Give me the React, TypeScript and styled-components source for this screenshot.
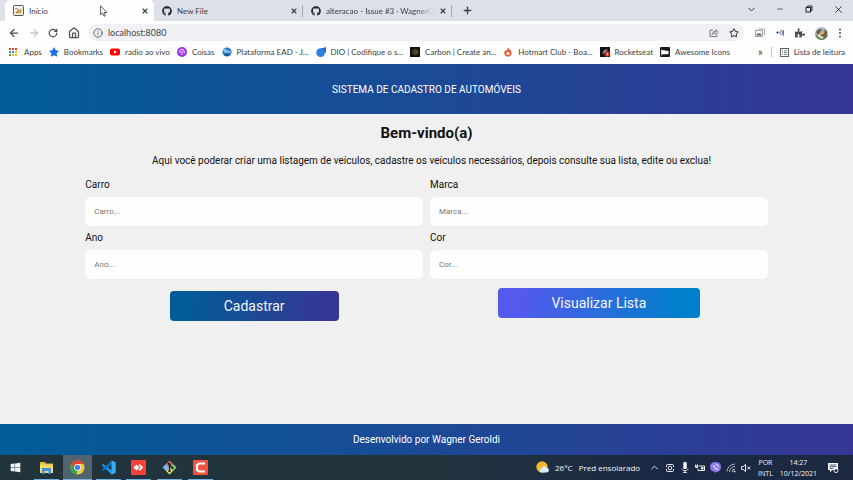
import React from 'react';
import styled, { createGlobalStyle, css } from 'styled-components';
import { FaGithub, FaStar, FaPuzzlePiece, FaWindows } from 'react-icons/fa';
import {
  ArrowLeft, ArrowRight, RotateCw, House, Info, Star, X, Plus, Minus, ChevronDown, ChevronUp,
} from 'lucide-react';

const GlobalStyle = createGlobalStyle`
  * { box-sizing: border-box; }
  body { margin: 0; font-family: Roboto, sans-serif; background: #f0f0f0; }
  button, input { font-family: inherit; margin: 0; }
  button { padding: 0; border: 0; background: none; color: inherit; cursor: pointer; }
  a { color: inherit; text-decoration: none; }
  svg { display: block; flex: none; }
`;

const browserFont = 'Lato, "Open Sans", sans-serif';
const taskbarFont = '"Open Sans", "Noto Sans", sans-serif';
const brandGradient = 'linear-gradient(to right, #005c97, #363795)';

const Screen = styled.div`
  min-height: 100vh;
  display: flex;
  flex-direction: column;
`;

/* ---------- browser window ---------- */

const Browser = styled.header`
  font-family: ${browserFont};
  font-size: 8px;
  line-height: 12px;
  color: #3c4043;
  background: #fefefe;
`;

const TabStrip = styled.div`
  display: flex;
  align-items: center;
  height: 21px;
  padding: 0 10px 0 5px;
  background: #dce0e8;
`;

const Tab = styled.div<{ $active?: boolean }>`
  position: relative;
  display: flex;
  align-items: center;
  gap: 5px;
  width: 149px;
  height: 21px;
  padding: 0 4px 0 8px;
  ${(p) => p.$active
    ? css`background: #fefefe; border-radius: 5px 5px 0 0;`
    : css`
      &::after { content: ''; width: 1px; height: 12px; background: #a5a9b3; position: absolute; right: 0; }
    `}
`;

const TabTitle = styled.span<{ $fade?: boolean }>`
  flex: 1;
  min-width: 0;
  white-space: nowrap;
  ${(p) => p.$fade && css`mask-image: linear-gradient(to right, #000 85%, transparent);`}
`;

const IconButton = styled.button`
  display: grid;
  place-items: center;
  width: 10px;
  height: 12px;
  flex: none;
`;

const NewTab = styled(IconButton)`
  margin-left: 10px;
`;

const WindowControls = styled.div`
  display: flex;
  gap: 19px;
  margin-left: auto;
  padding-bottom: 3px;
  color: #222;
`;

const Toolbar = styled.div`
  display: flex;
  align-items: center;
  gap: 10px;
  height: 23px;
  padding: 0 8px;
  color: #4b4f54;
`;

const AddressBar = styled.div`
  display: flex;
  flex: 1;
  align-items: center;
  gap: 5px;
  height: 17px;
  padding: 0 6px 0 5px;
  border-radius: 9px;
  background: #f0f1f5;
`;

const Address = styled.input`
  flex: 1;
  min-width: 0;
  border: 0;
  padding: 0;
  outline: 0;
  background: transparent;
  font-size: 9px;
  line-height: 14px;
  color: #44474b;
`;

const BarActions = styled.div`
  display: flex;
  gap: 10px;
`;

const Extensions = styled.div`
  display: flex;
  align-items: center;
  gap: 10px;
`;

const BookmarksBar = styled.nav`
  display: flex;
  align-items: center;
  gap: 7px;
  height: 20px;
  padding: 0 8px 4px 9px;
  white-space: nowrap;
`;

const Bookmark = styled.a`
  display: flex;
  align-items: center;
  gap: 5px;
`;

const ReadingList = styled.div`
  display: flex;
  align-items: center;
  gap: 8px;
  margin-left: auto;
`;

const More = styled.button`
  font-size: 11px;
  line-height: 12px;
`;

const Divider = styled.span`
  width: 1px;
  height: 10px;
  background: #c4c7cc;
`;

const Pointer = styled.svg`
  position: absolute;
  left: 100px;
  top: 5px;
`;

/* ---------- page ---------- */

const PageHeader = styled.div`
  display: grid;
  place-items: center;
  height: 50px;
  background: ${brandGradient};
  color: #fff;
  font-size: 10px;
`;

const Main = styled.main`
  flex: 1;
  padding: 9px 10% 0;
  background: #f0f0f0;
  color: #111;
`;

const Heading = styled.h1`
  margin: 0 0 11px;
  font-size: 15px;
  line-height: 20px;
  text-align: center;
`;

const Intro = styled.p`
  margin: 0 0 10px;
  padding-left: 10px;
  font-size: 10px;
  line-height: 14px;
  text-align: center;
`;

const Form = styled.form`
  display: grid;
  grid-template-columns: 1fr 1fr;
  column-gap: 7px;
  align-items: start;
`;

const Field = styled.label`
  display: flex;
  flex-direction: column;
  gap: 5px;
  margin-bottom: 5px;
  font-size: 10px;
  line-height: 14px;
`;

const TextBox = styled.input`
  width: 100%;
  height: 29px;
  padding: 0 9px;
  border: 0;
  border-radius: 6px;
  background: #fefefe;
  font-size: 8px;
  &::placeholder { color: #777; }
`;

const Action = styled.button<{ $secondary?: boolean }>`
  justify-self: center;
  width: ${(p) => (p.$secondary ? '60%' : '50%')};
  height: 30px;
  margin-top: ${(p) => (p.$secondary ? 4 : 7)}px;
  border-radius: 4px;
  background: ${(p) => (p.$secondary ? 'linear-gradient(100deg, #5659ee 10%, #007fcb 90%)' : 'linear-gradient(100deg, #005c97 8%, #363795 92%)')};
  color: #f4f6fb;
  font-size: 14px;
`;

const PageFooter = styled.footer`
  display: grid;
  place-items: center;
  height: 31px;
  background: ${brandGradient};
  color: #fff;
  font-size: 10px;
`;

/* ---------- taskbar ---------- */

const Taskbar = styled.div`
  display: flex;
  align-items: center;
  height: 25px;
  padding: 0 14px 0 0;
  background: linear-gradient(to right, #21343c, #22353e 50%, #1a2844 78%, #1c2941);
  color: #f3f5f7;
  font-family: ${taskbarFont};
  font-size: 8px;
  line-height: 11px;
`;

const StartButton = styled.button`
  display: grid;
  place-items: center;
  width: 30px;
  height: 25px;
  margin-right: 2px;
`;

const Apps = styled.div`
  display: grid;
  grid-template-columns: repeat(6, 1fr);
  gap: 2px;
  width: 183px;
`;

const AppButton = styled.button<{ $active?: boolean }>`
  display: flex;
  flex-direction: column;
  align-items: center;
  justify-content: space-between;
  height: 25px;
  padding-top: 5px;
  background: ${(p) => (p.$active ? '#51636d' : 'transparent')};
  &::after {
    content: '';
    width: ${(p) => (p.$active ? '100%' : '25px')};
    height: 1px;
    background: #76b2e4;
  }
`;

const Tray = styled.div`
  display: flex;
  align-items: center;
  gap: 5px;
  margin-left: auto;
  white-space: nowrap;
`;

const Weather = styled.button`
  display: flex;
  align-items: center;
  gap: 6px;
  margin-right: 4px;
  font-size: 8px;
`;

const TrayIcons = styled.div`
  display: flex;
  align-items: center;
  gap: 5px;
`;

const TrayText = styled.div`
  margin-left: 2px;
  font-size: 7px;
  text-align: center;
`;

const Notifications = styled(IconButton)`
  margin-left: 5px;
  width: 12px;
`;

/* ---------- drawings ---------- */

const AppsGrid = () => (
  <svg width="10" height="10" viewBox="0 0 10 10">
    {['#e94235', '#e94235', '#e94235', '#34a853', '#4285f4', '#fbbc05', '#34a853', '#fbbc05', '#fbbc05'].map((c, i) => (
      <rect key={i} x={(i % 3) * 3} y={1 + Math.floor(i / 3) * 3} width="2" height="2" fill={c} />
    ))}
  </svg>
);
const PageIcon = () => (
  <svg width="11" height="11" viewBox="0 0 11 11">
    <rect x=".5" y=".5" width="10" height="10" rx="1" fill="#f7f4e6" stroke="#555" />
    <path d="M2 8.500 5 5l1 1 2.500-3v5.500z" fill="#d4a148" /><path d="m2 3.500 3 .5 2 2M3 8l2-2" stroke="#8a6a42" strokeWidth=".8" fill="none" />
  </svg>
);
const YouTube = () => (
  <svg width="10" height="10" viewBox="0 0 10 10"><rect y="1.5" width="10" height="7" rx="2" fill="#f00" /><path d="m4 3.4 3 1.6-3 1.6z" fill="#fff" /></svg>
);
const Coisas = () => (
  <svg width="10" height="10" viewBox="0 0 10 10"><circle cx="5" cy="5" r="5" fill="#9a36e8" /><path d="M2.800 6V4.500a2.200 2.200 0 0 1 4.400 0V6M5 4v4" stroke="#fff" strokeWidth=".9" fill="none" /></svg>
);
const Globe = () => (
  <svg width="10" height="10" viewBox="0 0 10 10"><circle cx="5" cy="5" r="4.6" fill="#2479bd" /><path d="M1 3c2-2 3-1 4 0s3 0 4 2c-1 2-3 0-4 1S2 6 1 3" fill="#7fc1e8" /><path d="m3 6 3 1v2H4z" fill="#185287" /></svg>
);
const Dio = () => (
  <svg width="10" height="10" viewBox="0 0 10 10"><circle cx="4.6" cy="5.6" r="4.4" fill="#2f7fe0" /><path d="M5 1.6 10 0v6z" fill="#2869d8" /></svg>
);
const CarbonIcon = () => (
  <svg width="10" height="10" viewBox="0 0 10 10"><rect width="10" height="10" fill="#141310" /><path d="M7.5 3.5C6 1.6 2.8 2.5 2.8 5S6 8.400 7.500 6.500M4.500 4.200h3v1.800h-3z" stroke="#8a7040" strokeWidth=".8" fill="none" /></svg>
);
const Flame = () => (
  <svg width="10" height="10" viewBox="0 0 10 10"><path d="M4.600 0C5 1.500 8.600 3.300 8.600 6.400a3.700 3.700 0 0 1-7.300 0C1.300 4.800 2 4 2.400 3l1 1C4.500 3 4.700 1.500 4.600 0" fill="#f04e23" /><circle cx="5" cy="6.400" r="1.600" fill="#fff" /></svg>
);
const Rocket = () => (
  <svg width="10" height="10" viewBox="0 0 10 10"><rect width="10" height="10" fill="#151515" /><path d="M2 7.500 4 3l4-.8L6 5z" fill="#bbb" opacity=".7" /><circle cx="7.200" cy="7" r="2.700" fill="#d92a22" /><path d="M6.600 6.200h.8v2.300" stroke="#fff" strokeWidth=".8" fill="none" /></svg>
);
const FlagIcon = () => (
  <svg width="10" height="10" viewBox="0 0 10 10"><rect width="10" height="10" rx="1" fill="#17191d" /><path d="M1.500 3.200h3l.8.600h3.200v3.400h-7z" fill="#fff" /><path d="M1.700 2.500v6" stroke="#fff" strokeWidth=".8" /></svg>
);
const ListIcon = () => (
  <svg width="9" height="9" viewBox="0 0 9 9" fill="none" stroke="#5c6066"><rect x=".5" y=".5" width="8" height="8" /><path d="M2 2.800h1M4 2.800h3M2 4.600h1M4 4.600h3M2 6.400h1M4 6.400h3" strokeWidth=".8" /></svg>
);
const Share = () => (
  <svg width="10" height="10" viewBox="0 0 10 10" fill="none" stroke="#6b6f75" strokeWidth=".9"><path d="M4 2H1v6.500h7V7M3 6.500C3.200 4.600 4.500 3.500 6 3.500h1V1.600l2.400 2.600L7 6.600V5C5.500 4.800 4 5.300 3 6.500z" /></svg>
);
const Photos = () => (
  <svg width="10" height="10" viewBox="0 0 10 10"><path d="M2.500 1h7v6h-1" fill="none" stroke="#a4a8ad" /><rect x=".5" y="2.500" width="7" height="6" fill="#fff" stroke="#8c9096" strokeWidth=".8" /><path d="M1.500 7.500a2.500 2.500 0 0 1 5 0z" fill="#e44e35" /><path d="M3 7.500a1.500 1.500 0 0 1 3.500 0z" fill="#3a80e8" /><path d="M1.300 6.600h1.500v1H1.300z" fill="#3aa757" /></svg>
);
const Speed = () => (
  <svg width="10" height="10" viewBox="0 0 10 10" fill="none" stroke="#47618f"><path d="M1 4.500h3M2.500 3v3" strokeWidth=".8" /><rect x="5" y="2.500" width="2.500" height="4" rx="1.200" strokeWidth=".9" /><path d="M8.500 2v6" strokeWidth=".8" /></svg>
);
const Avatar = () => (
  <svg width="13" height="13" viewBox="0 0 13 13"><defs><clipPath id="av"><circle cx="6.500" cy="6.500" r="6.500" /></clipPath></defs><g clipPath="url(#av)"><rect width="13" height="13" fill="#a8b7c4" /><path d="M0 8h13v5H0z" fill="#637a4c" /><path d="m1 5 3-3 3 1 4 4-2 4-5-2z" fill="#6d5a48" /><circle cx="7" cy="5.600" r="2" fill="#dfb66a" /><path d="m2 9 3-3 1 3 3 1-2 2z" fill="#e4ddbe" /><path d="m9 2 3 3-1 4z" fill="#41522f" /></g></svg>
);
const Dots = () => (
  <svg width="10" height="10" viewBox="0 0 10 10" fill="#50545a"><circle cx="5" cy="1.500" r="1" /><circle cx="5" cy="5" r="1" /><circle cx="5" cy="8.500" r="1" /></svg>
);
const Restore = () => (
  <svg width="8" height="8" viewBox="0 0 8 8" fill="none" stroke="#222"><path d="M2.500 2V1h4.500v4.500H6" /><rect x="1" y="2.500" width="4.500" height="4.500" /></svg>
);
const Folder = () => (
  <svg width="15" height="15" viewBox="0 0 15 15"><path d="M1 2h5l1 1.500h7V13H1z" fill="#e9b73d" /><path d="M1 4.500h13V13H1z" fill="#fbd667" /><path d="M3 14V8h9v6H9.500v-3h-4v3z" fill="#3c94df" /></svg>
);
const Chrome = () => (
  <svg width="15" height="15" viewBox="0 0 15 15"><circle cx="7.500" cy="7.500" r="7" fill="#f9c934" /><path d="M1.440 4A7 7 0 0 1 13.560 4H7.500L4.470 9.250z" fill="#e34133" /><path d="M1.440 4 4.470 9.250 7.500 11l-.9 3.440A7 7 0 0 1 1.440 4" fill="#31a353" /><circle cx="7.500" cy="7.500" r="3.400" fill="#fff" /><circle cx="7.500" cy="7.500" r="2.700" fill="#4384ee" /></svg>
);
const VsCode = () => (
  <svg width="15" height="15" viewBox="0 0 16 16"><path d="M11.300.5 15.500 2.500v11l-4.200 2L1.500 6.200.8 5.300l1.500-1L11.500 11V5z" fill="#2497e6" /><path d="m.8 10.700 1.500 1.100L11.500 5V.5L1.500 9.700z" fill="#0873bd" /><path d="M11.300.5 15.500 2.500v11l-4.200 2z" fill="#38aaf2" /></svg>
);
const AnyDesk = () => (
  <svg width="15" height="15" viewBox="0 0 15 15"><rect width="15" height="15" fill="#f5403a" /><path d="m5.500 4.500 3 3-3 3-3-3z" fill="#fff" /><path d="M7.500 5.200 8.700 4l3.500 3.500L8.700 11 7.500 9.800l2.300-2.300z" fill="#fff" /></svg>
);
const GitIcon = () => (
  <svg width="15" height="15" viewBox="0 0 16 16"><path d="m8 .5 3.700 3.700L8 8 4.300 4.200z" fill="#ee6a55" /><path d="M4.300 4.300 8 8l-3.700 3.700L.5 8z" fill="#83b2ee" /><path d="M11.700 4.300 15.500 8l-3.800 3.700L8 8z" fill="#8fd36b" /><path d="m8 8 3.700 3.700L8 15.500l-3.700-3.800z" fill="#f2dc69" /><path d="M6 2.500 8 4.500v8M8 5.500l3 3" stroke="#1c2529" strokeWidth="1.300" fill="none" /><circle cx="8" cy="4.700" r="1.300" fill="#1c2529" /><circle cx="8" cy="11.700" r="1.300" fill="#1c2529" /><circle cx="11.300" cy="8.300" r="1.300" fill="#1c2529" /></svg>
);
const Camtasia = () => (
  <svg width="15" height="15" viewBox="0 0 15 15"><rect width="15" height="15" rx="1" fill="#f4513f" /><path d="M12 3.500H6L4 5v5l2 1.500h6" stroke="#fff" strokeWidth="2.200" fill="none" /></svg>
);
const Sun = () => (
  <svg width="13" height="13" viewBox="0 0 13 13"><circle cx="6" cy="6" r="5.700" fill="#f9b52c" /><path d="M5.500 11.500a2.200 2.200 0 0 1 0-4.300 3 3 0 0 1 5.500-.4 2.400 2.400 0 0 1 0 4.700z" fill="#dce9f5" /></svg>
);
const Camera = () => (
  <svg width="10" height="10" viewBox="0 0 10 10" fill="none" stroke="#fff" strokeWidth=".9"><path d="M1.500 4V2.500q0-1 1-1h5q1 0 1 1V4M1.500 6v1.500q0 1 1 1h5q1 0 1-1V6" /><circle cx="5" cy="5" r="1.800" /></svg>
);
const Mic = () => (
  <svg width="10" height="11" viewBox="0 0 10 11"><rect x="3.300" y="0" width="3.400" height="7" rx="1" fill="#fff" /><path d="M2 6.500C2 9.500 8 9.500 8 6.500M5 8.500v2M3 10.500h4" stroke="#e5e8ea" strokeWidth=".9" fill="none" /></svg>
);
const Battery = () => (
  <svg width="10" height="10" viewBox="0 0 10 10" fill="none" stroke="#fff" strokeWidth=".9"><path d="M3.500 3H9.500v4.500H3V5.500M0 3h3M.7 1.500v3h1.800v-3" /><path d="M6 4.200h2.500v2.200H6z" fill="#fff" stroke="none" /></svg>
);
const Viber = () => (
  <svg width="11" height="11" viewBox="0 0 11 11"><path d="M5.500 0c3.700 0 5.500 1.600 5.500 5s-1.800 5-5 5L4.500 11V9.800C1.500 9.400 0 8 0 5s1.800-5 5.500-5" fill="#8b78ee" /><path d="M3.500 2.800c-1 .8 1.700 5 3.500 5.200l.8-.8-1.300-1-.6.400-1.500-1.900.5-.7z" fill="#fff" /><path d="M5.800 2.300a2.700 2.700 0 0 1 2.600 2.900" fill="none" stroke="#fff" strokeWidth=".8" /></svg>
);
const Wifi = () => (
  <svg width="10" height="10" viewBox="0 0 10 10" fill="none" stroke="#b7bec6" strokeWidth=".9"><path d="M1 8.500A8 8 0 0 1 9 1M3.500 8.800A5.500 5.500 0 0 1 9 3.500M6 9a3 3 0 0 1 3-3" /><circle cx="8.500" cy="8.500" r=".7" fill="#fff" /></svg>
);
const Muted = () => (
  <svg width="10" height="10" viewBox="0 0 10 10" fill="none" stroke="#fff" strokeWidth=".9"><path d="M.6 3.500h1.600L4.500 1.500v7L2.200 6.500H.6zM6.300 3.500l3 3M9.300 3.500l-3 3" /></svg>
);
const NoteIcon = () => (
  <svg width="12" height="12" viewBox="0 0 12 12"><path d="M1 1h10v7H5l-2 2.500V8H1z" fill="#fff" /><path d="M2.500 3h7M2.500 4.700h7M2.500 6.400h4" stroke="#243048" strokeWidth=".8" /><circle cx="9" cy="8.700" r="2" fill="#243048" stroke="#fff" strokeWidth=".8" /></svg>
);

/* ---------- data ---------- */

const bookmarks: [string, React.ReactNode][] = [
  ['Apps', <AppsGrid />],
  ['Bookmarks', <FaStar size={10} color="#1a73e8" />],
  ['radio ao vivo', <YouTube />],
  ['Coisas', <Coisas />],
  ['Plataforma EAD - J...', <Globe />],
  ['DIO | Codifique o s...', <Dio />],
  ['Carbon | Create an...', <CarbonIcon />],
  ['Hotmart Club - Boa...', <Flame />],
  ['Rocketseat', <Rocket />],
  ['Awesome Icons', <FlagIcon />],
];

const tabs: [string, React.ReactNode][] = [
  ['Início', <PageIcon />],
  ['New File', <FaGithub size={10} color="#24292e" />],
  ['alteracao - Issue #3 · WagnerGer', <FaGithub size={10} color="#24292e" />],
];

const taskApps: [string, React.ReactNode][] = [
  ['Explorador de Arquivos', <Folder />],
  ['Google Chrome', <Chrome />],
  ['Visual Studio Code', <VsCode />],
  ['AnyDesk', <AnyDesk />],
  ['Git', <GitIcon />],
  ['Camtasia', <Camtasia />],
];

const fields = ['Carro', 'Marca', 'Ano', 'Cor'];

export default function App() {
  return (
    <Screen>
      <GlobalStyle />
      <Browser>
        <TabStrip>
          {tabs.map(([title, icon], i) => (
            <Tab key={title} $active={i === 0}>
              {icon}
              <TabTitle $fade={i === 2}>{title}</TabTitle>
              <IconButton aria-label="Fechar guia"><X size={8} strokeWidth={3.5} /></IconButton>
            </Tab>
          ))}
          <NewTab aria-label="Nova guia"><Plus size={11} strokeWidth={3} /></NewTab>
          <WindowControls>
            <IconButton aria-label="Pesquisar guias"><ChevronDown size={11} /></IconButton>
            <IconButton aria-label="Minimizar"><Minus size={8} /></IconButton>
            <IconButton aria-label="Restaurar"><Restore /></IconButton>
            <IconButton aria-label="Fechar"><X size={11} /></IconButton>
          </WindowControls>
        </TabStrip>
        <Toolbar>
          <IconButton aria-label="Voltar"><ArrowLeft size={12} strokeWidth={2.5} /></IconButton>
          <IconButton aria-label="Avançar"><ArrowRight size={12} color="#aaa" /></IconButton>
          <IconButton aria-label="Recarregar"><RotateCw size={10} strokeWidth={3} /></IconButton>
          <IconButton aria-label="Início"><House size={12} strokeWidth={2.5} /></IconButton>
          <AddressBar>
            <Info size={10} />
            <Address aria-label="Endereço" defaultValue="localhost:8080" />
            <BarActions>
              <IconButton aria-label="Compartilhar"><Share /></IconButton>
              <IconButton aria-label="Favoritar"><Star size={10} strokeWidth={2.5} /></IconButton>
            </BarActions>
          </AddressBar>
          <Extensions>
            <IconButton aria-label="Fotos"><Photos /></IconButton>
            <IconButton aria-label="Velocidade"><Speed /></IconButton>
            <IconButton aria-label="Extensões"><FaPuzzlePiece size={10} /></IconButton>
            <IconButton aria-label="Perfil"><Avatar /></IconButton>
            <IconButton aria-label="Menu"><Dots /></IconButton>
          </Extensions>
        </Toolbar>
        <BookmarksBar>
          {bookmarks.map(([name, icon]) => (
            <Bookmark key={name} href="#">{icon}{name}</Bookmark>
          ))}
          <ReadingList>
            <More>»</More>
            <Divider />
            <Bookmark href="#"><ListIcon />Lista de leitura</Bookmark>
          </ReadingList>
        </BookmarksBar>
        <Pointer width="8" height="12" viewBox="0 0 8 12">
          <path d="M.6.800v9l2-1.800 1.400 3.300 1.500-.700L4.100 7.500h2.800z" fill="#fff" stroke="#333" strokeWidth=".8" />
        </Pointer>
      </Browser>

      <PageHeader>SISTEMA DE CADASTRO DE AUTOMÓVEIS</PageHeader>
      <Main>
        <Heading>Bem-vindo(a)</Heading>
        <Intro>
          Aqui você poderar criar uma listagem de veículos, cadastre os veículos necessários, depois consulte sua lista, edite ou exclua!
        </Intro>
        <Form onSubmit={(e) => e.preventDefault()}>
          {fields.map((name) => (
            <Field key={name}>
              {name}
              <TextBox name={name.toLowerCase()} placeholder={`${name}...`} />
            </Field>
          ))}
          <Action type="submit">Cadastrar</Action>
          <Action type="button" $secondary>Visualizar Lista</Action>
        </Form>
      </Main>
      <PageFooter>Desenvolvido por Wagner Geroldi</PageFooter>

      <Taskbar>
        <StartButton aria-label="Iniciar"><FaWindows size={11} /></StartButton>
        <Apps>
          {taskApps.map(([name, icon], i) => (
            <AppButton key={name} aria-label={name} $active={i === 1}>{icon}</AppButton>
          ))}
        </Apps>
        <Tray>
          <Weather><Sun /><span>26°C</span><span>Pred ensolarado</span></Weather>
          <TrayIcons>
            <ChevronUp size={11} />
            <Camera />
            <Mic />
            <Battery />
            <Viber />
            <Wifi />
            <Muted />
          </TrayIcons>
          <TrayText>POR<br />INTL</TrayText>
          <TrayText>14:27<br />10/12/2021</TrayText>
          <Notifications aria-label="Notificações"><NoteIcon /></Notifications>
        </Tray>
      </Taskbar>
    </Screen>
  );
}
